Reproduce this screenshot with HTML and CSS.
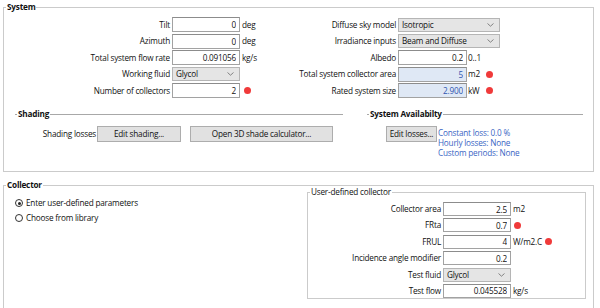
FILE: index.html
```html
<!DOCTYPE html>
<html>
<head>
    <meta charset="UTF-8">
    <title>System</title>
    <link rel="stylesheet" href="styles.css">
</head>
<body>
<fieldset class="group system">
    <legend>System</legend>
    <div class="system-fields">
        <div class="form form-left">
            <label>Tilt</label>
            <div class="field"><input class="num" value="0" readonly><span class="unit">deg</span></div>
            <label>Azimuth</label>
            <div class="field"><input class="num" value="0" readonly><span class="unit">deg</span></div>
            <label>Total system flow rate</label>
            <div class="field"><input class="num" value="0.091056" readonly><span class="unit">kg/s</span></div>
            <label>Working fluid</label>
            <div class="field"><div class="combo"><span>Glycol</span><svg width="7" height="4" viewBox="0 0 7 4"><path d="M0.5 0.5 L3.5 3.2 L6.5 0.5" fill="none" stroke="#777" stroke-width="0.9"/></svg></div></div>
            <label>Number of collectors</label>
            <div class="field"><input class="num" value="2" readonly><span class="dot"></span></div>
        </div>
        <div class="form form-right">
            <label>Diffuse sky model</label>
            <div class="field"><div class="combo wide"><span>Isotropic</span><svg width="7" height="4" viewBox="0 0 7 4"><path d="M0.5 0.5 L3.5 3.2 L6.5 0.5" fill="none" stroke="#777" stroke-width="0.9"/></svg></div></div>
            <label>Irradiance inputs</label>
            <div class="field"><div class="combo wide"><span>Beam and Diffuse</span><svg width="7" height="4" viewBox="0 0 7 4"><path d="M0.5 0.5 L3.5 3.2 L6.5 0.5" fill="none" stroke="#777" stroke-width="0.9"/></svg></div></div>
            <label>Albedo</label>
            <div class="field"><input class="num" value="0.2" readonly><span class="unit tight">0..1</span></div>
            <label>Total system collector area</label>
            <div class="field"><input class="num calc" value="5" readonly><span class="unit tight fixed">m2</span><span class="dot"></span></div>
            <label>Rated system size</label>
            <div class="field"><input class="num calc" value="2.900" readonly><span class="unit tight fixed">kW</span><span class="dot"></span></div>
        </div>
    </div>
    <div class="subgroups">
        <fieldset class="subgroup shading">
            <legend>Shading</legend>
            <div class="shading-row">
                <span class="row-label">Shading losses</span>
                <button>Edit shading...</button>
                <button class="btn-3d">Open 3D shade calculator...</button>
            </div>
        </fieldset>
        <fieldset class="subgroup avail">
            <legend>System Availabilty</legend>
            <div class="avail-row">
                <button class="btn-losses">Edit losses...</button>
                <div class="losses">
                    <div>Constant loss: 0.0 %</div>
                    <div>Hourly losses: None</div>
                    <div>Custom periods: None</div>
                </div>
            </div>
        </fieldset>
    </div>
</fieldset>

<fieldset class="group collector">
    <legend>Collector</legend>
    <div class="collector-body">
        <div class="choices">
            <div class="choice"><span class="radio checked"></span>Enter user-defined parameters</div>
            <div class="choice"><span class="radio"></span>Choose from library</div>
        </div>
        <fieldset class="userdef">
            <legend>User-defined collector</legend>
            <div class="form form-coll">
                <label>Collector area</label>
                <div class="field"><input class="num" value="2.5" readonly><span class="unit">m2</span></div>
                <label>FRta</label>
                <div class="field"><input class="num" value="0.7" readonly><span class="dot near"></span></div>
                <label>FRUL</label>
                <div class="field"><input class="num" value="4" readonly><span class="unit">W/m2.C</span><span class="dot near"></span></div>
                <label>Incidence angle modifier</label>
                <div class="field"><input class="num" value="0.2" readonly></div>
                <label>Test fluid</label>
                <div class="field"><div class="combo"><span>Glycol</span><svg width="7" height="4" viewBox="0 0 7 4"><path d="M0.5 0.5 L3.5 3.2 L6.5 0.5" fill="none" stroke="#777" stroke-width="0.9"/></svg></div></div>
                <label>Test flow</label>
                <div class="field"><input class="num" value="0.045528" readonly><span class="unit">kg/s</span></div>
            </div>
        </fieldset>
    </div>
</fieldset>
</body>
</html>
```

FILE: styles.css
```css
body {
    margin: 0;
    background-color: #fff;
    color: #111;
    font-family: "Open Sans", "Noto Sans", sans-serif;
    font-size: 8.2px;
    letter-spacing: -0.2px;
    line-height: 10px;
}

fieldset {
    margin: 0;
    padding: 0;
    min-width: 0;
}

legend {
    margin-left: 2px;
    padding: 0 1px;
    line-height: 10px;
}

.group {
    margin: 2px 6px 0 3px;
    border: 1px solid #cbcbcb;
}

.group > legend {
    font-weight: bold;
}

.system {
    padding-bottom: 13px;
}

/* two form columns */
.system-fields {
    display: flex;
    padding-top: 5px;
}

.form {
    display: grid;
    grid-auto-rows: 15px;
    row-gap: 1.5px;
    column-gap: 2px;
    align-items: center;
}

.form-left {
    width: 286px;
    grid-template-columns: 166px auto;
}

.form-right {
    grid-template-columns: 106px auto;
}

.form label {
    text-align: right;
    white-space: nowrap;
}

.field {
    display: flex;
    align-items: center;
    height: 100%;
}

.num {
    box-sizing: border-box;
    width: 68px;
    height: 15px;
    margin: 0;
    padding: 0 3px;
    border: 1px solid #a2a2a2;
    border-top-color: #8c8c8c;
    background-color: #fff;
    font: inherit;
    letter-spacing: inherit;
    color: #111;
    text-align: right;
    outline: none;
}

.form-right .num {
    width: 69px;
}

.num.calc {
    background-color: #dfe8f5;
    color: #2f56b0;
}

.combo {
    box-sizing: border-box;
    display: flex;
    align-items: center;
    justify-content: space-between;
    width: 68px;
    height: 14px;
    padding: 0 5px 0 3px;
    border: 1px solid #b5b5b5;
    background-color: #e5e5e5;
}

.combo.wide {
    width: 102px;
}

.unit {
    margin-left: 2px;
}

.unit.tight {
    margin-left: 1px;
}

.unit.fixed {
    width: 14px;
}

.dot {
    width: 7px;
    height: 7px;
    margin-left: 4px;
    border-radius: 50%;
    background-color: #f03a3a;
}

.dot.near {
    margin-left: 3px;
}

/* shading + availability */
.subgroups {
    display: flex;
    margin-top: 11px;
}

.subgroup {
    border: 0;
    border-top: 1px solid #a8a8a8;
}

.subgroup > legend {
    font-weight: bold;
}

.shading {
    width: 328px;
    margin-left: 11px;
}

.avail {
    width: 216px;
    margin-left: 24px;
}

button {
    box-sizing: border-box;
    height: 16px;
    margin: 0;
    padding: 0;
    border: 1px solid #adadad;
    background-color: #e1e1e1;
    font: inherit;
    letter-spacing: inherit;
    color: #111;
}

.shading-row {
    display: flex;
    align-items: center;
    margin-top: 7px;
}

.row-label {
    width: 54px;
    margin-left: 27px;
    margin-right: 1px;
    text-align: right;
    white-space: nowrap;
}

.shading-row button {
    width: 84px;
}

.shading-row .btn-3d {
    width: 143px;
    margin-left: 9px;
}

.avail-row {
    display: flex;
    align-items: flex-start;
    margin-top: 7px;
    margin-left: 19px;
}

.btn-losses {
    width: 51px;
}

.losses {
    margin-top: 2px;
    margin-left: 1px;
    color: #3a66c4;
    white-space: nowrap;
}

/* collector */
.collector {
    margin-top: 8px;
    padding-bottom: 20px;
}

.collector-body {
    display: flex;
    justify-content: space-between;
}

.choices {
    margin-top: 8px;
    margin-left: 11px;
}

.choice {
    display: flex;
    align-items: center;
    height: 10px;
    margin-bottom: 5px;
}

.radio {
    box-sizing: border-box;
    position: relative;
    width: 8px;
    height: 8px;
    margin-right: 3px;
    border: 1px solid #333;
    border-radius: 50%;
    background-color: #fff;
}

.radio.checked::after {
    content: "";
    position: absolute;
    left: 1.5px;
    top: 1.5px;
    width: 3px;
    height: 3px;
    border-radius: 50%;
    background-color: #222;
}

.userdef {
    width: 279px;
    box-sizing: border-box;
    margin: -3px 7px 0 0;
    padding: 5px 0 0 0;
    border: 1px solid #cbcbcb;
}

.form-coll {
    grid-template-columns: 133px auto;
    grid-auto-rows: 14px;
    row-gap: 2.4px;
}

.form-coll .num,
.form-coll .combo {
    height: 14px;
}
```
